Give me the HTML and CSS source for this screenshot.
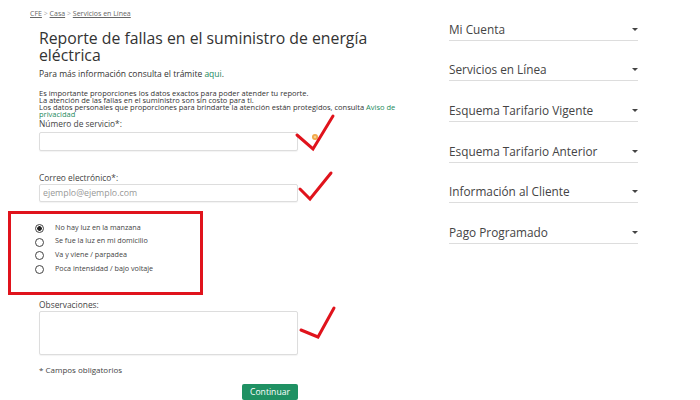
FILE: index.html
```html
<!DOCTYPE html>
<html lang="es">
  <head>
    <meta charset="UTF-8" />
    <meta name="viewport" content="width=device-width, initial-scale=1.0" />
    <title>Reporte de fallas</title>
    <link rel="stylesheet" href="styles.css">
  </head>
  <body>
    <div class="page">
      <div class="main">
        <div class="breadcrumb">
          <a href="#">CFE</a> <span class="sep">&gt;</span>
          <a href="#">Casa</a> <span class="sep">&gt;</span>
          <a href="#">Servicios en Línea</a>
        </div>
        <div class="content">
          <h1>Reporte de fallas en el suministro de energía eléctrica</h1>
          <p class="intro">Para más información consulta el trámite <a href="#">aqui</a>.</p>
          <p class="notice">
            Es importante proporciones los datos exactos para poder atender tu reporte.<br />
            La atención de las fallas en el suministro son sin costo para ti.<br />
            Los datos personales que proporciones para brindarte la atención están protegidos, consulta <a href="#">Aviso de privacidad</a>
          </p>
          <form class="report-form">
            <label class="field-label field-first" for="servicio">Número de servicio*:</label>
            <input class="field-input" type="text" id="servicio" name="servicio" />

            <label class="field-label field-second" for="correo">Correo electrónico*:</label>
            <input class="field-input field-input-short" type="text" id="correo" name="correo" placeholder="ejemplo@ejemplo.com" />

            <div class="options">
              <label class="option"><input type="radio" name="falla" checked /> No hay luz en la manzana</label>
              <label class="option"><input type="radio" name="falla" /> Se fue la luz en mi domicilio</label>
              <label class="option"><input type="radio" name="falla" /> Va y viene / parpadea</label>
              <label class="option"><input type="radio" name="falla" /> Poca intensidad / bajo voltaje</label>
            </div>

            <label class="field-label field-obs" for="obs">Observaciones:</label>
            <textarea class="field-area" id="obs" name="obs"></textarea>

            <p class="required">* Campos obligatorios</p>
            <button class="submit" type="button">Continuar</button>
          </form>
        </div>
      </div>

      <ul class="sidebar">
        <li class="menu-item">Mi Cuenta <span class="caret"></span></li>
        <li class="menu-item">Servicios en Línea <span class="caret"></span></li>
        <li class="menu-item">Esquema Tarifario Vigente <span class="caret"></span></li>
        <li class="menu-item">Esquema Tarifario Anterior <span class="caret"></span></li>
        <li class="menu-item">Información al Cliente <span class="caret"></span></li>
        <li class="menu-item">Pago Programado <span class="caret"></span></li>
      </ul>

      <!-- marcas rojas encima del formulario -->
      <svg class="marks" width="700" height="400" viewBox="0 0 700 400">
        <circle cx="315" cy="137" r="3" fill="#f0a848" />
        <circle cx="315" cy="137" r="1.3" fill="#f7cf8e" />
        <polyline points="297,135 313,149 333,116" />
        <polyline points="300,189 310,199 331,173" />
        <polyline points="301,330 318,337 334,308" />
      </svg>
    </div>
  </body>
</html>
```

FILE: styles.css
```css
* {
  margin: 0;
  padding: 0;
  box-sizing: border-box;
}
body {
  background-color: #fff;
  font-family: "Open Sans", "DejaVu Sans", sans-serif;
  color: #333;
}
a {
  color: #1d8a5c;
  text-decoration: none;
}
.page {
  position: relative;
  display: flex;
  width: 700px;
  height: 400px;
  overflow: hidden;
}
.main {
  width: 449px;
  padding: 9px 0 0 30px;
}
.breadcrumb {
  font-size: 7px;
  line-height: 9px;
  color: #888;
}
.breadcrumb a {
  color: #666;
  text-decoration: underline;
}
.breadcrumb .sep {
  color: #aaa;
}
.content {
  margin-left: 9px;
  width: 382px;
}
h1 {
  font-size: 15.8px;
  line-height: 17px;
  font-weight: 400;
  color: #333;
  margin-top: 11.5px;
  width: 350px;
}
.intro {
  font-size: 8.5px;
  line-height: 10px;
  margin-top: 5.5px;
}
.notice {
  font-size: 7.5px;
  line-height: 6.8px;
  margin-top: 11.4px;
}
.report-form {
  display: flex;
  flex-direction: column;
  width: 259px;
}
.field-label {
  font-size: 8.4px;
  line-height: 10px;
  color: #444;
}
.field-first {
  margin-top: 1.4px;
}
.field-second {
  margin-top: 22px;
}
.field-obs {
  margin-top: 5px;
}
.field-input {
  margin-top: 3px;
  height: 19px;
  border: 1px solid #ddd;
  border-radius: 2px;
  box-shadow: 0 1px 1px rgba(0, 0, 0, 0.05);
  padding: 0 3px;
  font-family: inherit;
  font-size: 8.8px;
  color: #555;
}
.field-input-short {
  height: 18px;
  margin-top: 1px;
}
.field-input::placeholder {
  color: #999;
}
.options {
  display: flex;
  flex-direction: column;
  margin: 9px 0 0 -31px;
  width: 195px;
  border: 3px solid #e0131c;
  padding: 6.7px 0 16.3px 24px;
}
.option {
  display: flex;
  align-items: center;
  gap: 11px;
  font-size: 7.2px;
  line-height: 13.7px;
  height: 13.7px;
  color: #444;
}
.option input {
  appearance: none;
  width: 9px;
  height: 9px;
  border: 1px solid #444;
  border-radius: 50%;
  background: #fff;
  margin-top: 2px;
}
.option input:checked {
  background: radial-gradient(circle, #222 0 2px, #fff 2.6px);
}
.field-area {
  margin-top: 1px;
  height: 44px;
  border: 1px solid #ddd;
  border-radius: 2px;
  box-shadow: 0 1px 1px rgba(0, 0, 0, 0.05);
  resize: none;
}
.required {
  font-size: 8px;
  line-height: 10px;
  margin-top: 10px;
  color: #444;
}
.submit {
  align-self: flex-end;
  margin-top: 9px;
  width: 56px;
  height: 16px;
  border: none;
  border-radius: 2px;
  background-color: #1f9163;
  color: #fff;
  font-family: inherit;
  font-size: 8.6px;
}
.sidebar {
  list-style: none;
  width: 189px;
}
.menu-item {
  display: flex;
  justify-content: space-between;
  align-items: center;
  padding: 22.7px 0 5px;
  font-size: 11.8px;
  line-height: 12px;
  color: #444;
  border-bottom: 1px solid #ddd;
}
.caret {
  width: 0;
  height: 0;
  margin-top: 1px;
  border-top: 3.5px solid #444;
  border-left: 3px solid transparent;
  border-right: 3px solid transparent;
}
.marks {
  position: absolute;
  top: 0;
  left: 0;
  pointer-events: none;
}
.marks polyline {
  fill: none;
  stroke: #e0131c;
  stroke-width: 3;
  stroke-linecap: round;
  stroke-linejoin: miter;
}
```
